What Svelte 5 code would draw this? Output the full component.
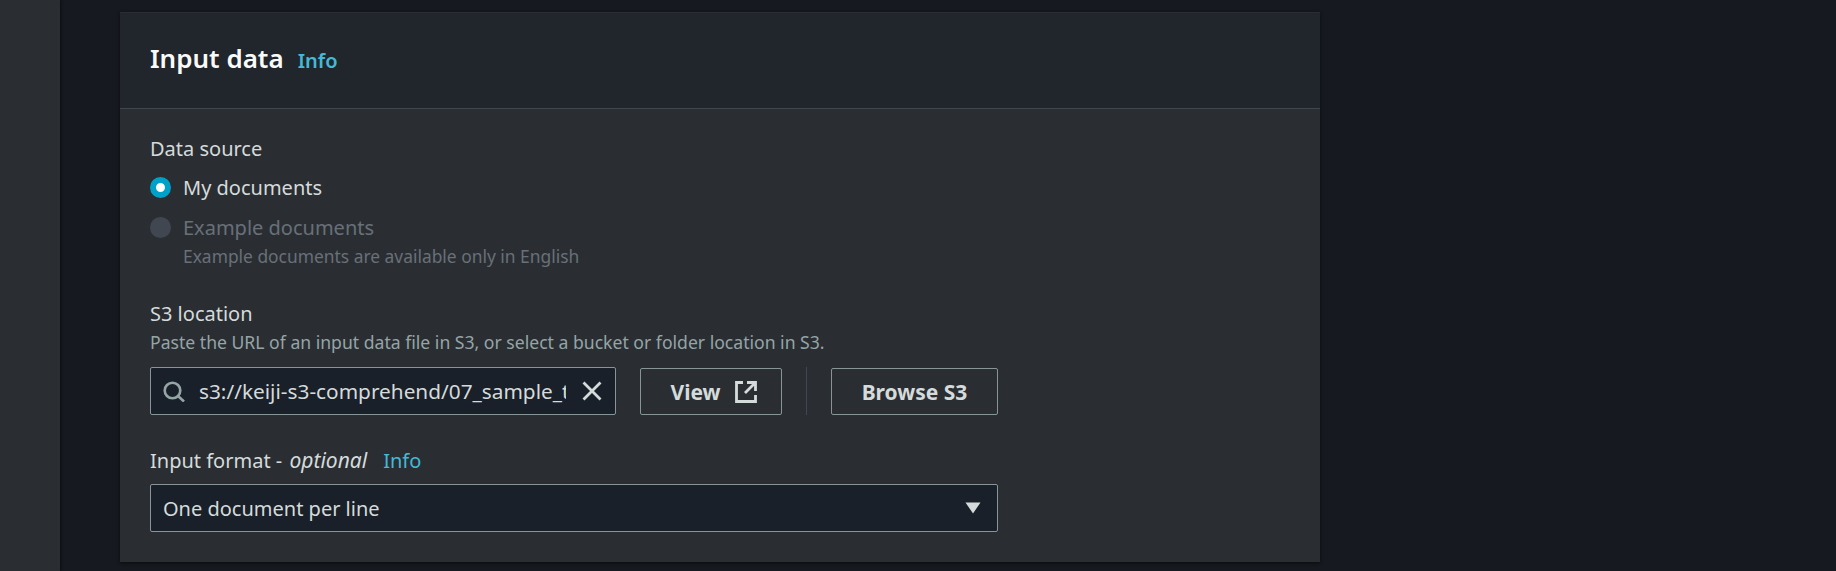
<script>
  const label = 'One document per line';
</script>

<div class="page">
  <aside class="rail"></aside>
  <main class="main">
    <section class="card">
      <header class="head">
        <h2>Input data</h2>
        <span class="info big">Info</span>
      </header>
      <div class="body">
        <div class="field source">
          <div class="label">Data source</div>
          <div class="radio on-row">
            <span class="dot on"></span>
            <span class="rtext">My documents</span>
          </div>
          <div class="radio off-row">
            <span class="dot off"></span>
            <div>
              <div class="rtext disabled">Example documents</div>
              <div class="rdesc">Example documents are available only in English</div>
            </div>
          </div>
        </div>

        <div class="field s3">
          <div class="label">S3 location</div>
          <div class="desc">Paste the URL of an input data file in S3, or select a bucket or folder location in S3.</div>
          <div class="s3row">
            <div class="search">
              <svg class="mag" viewBox="0 0 22 21" width="22" height="21" aria-hidden="true">
                <circle cx="9.5" cy="9.5" r="7.8" fill="none" stroke="currentColor" stroke-width="2.6"/>
                <path d="M15 15 L21 20.5" fill="none" stroke="currentColor" stroke-width="2.6"/>
              </svg>
              <span class="value">s3://keiji-s3-comprehend/07_sample_text.txt</span>
              <svg class="x" viewBox="0 0 20 20" width="20" height="20" aria-hidden="true">
                <path d="M1.5 1.5 L18.5 18.5 M18.5 1.5 L1.5 18.5" fill="none" stroke="currentColor" stroke-width="2.8"/>
              </svg>
            </div>
            <button class="btn view">
              View
              <svg viewBox="0 0 22 22" width="22" height="22" aria-hidden="true">
                <path d="M8 1.5 H1.5 V20.5 H20.5 V14 M12 1.5 H20.5 V10 M20 2 L10 12" fill="none" stroke="currentColor" stroke-width="2.8"/>
              </svg>
            </button>
            <span class="vr"></span>
            <button class="btn browse">Browse S3</button>
          </div>
        </div>

        <div class="field format">
          <div class="label">Input format - <em>optional</em><span class="info small">Info</span></div>
          <div class="select">
            <span>{label}</span>
            <svg viewBox="0 0 16 12" width="16" height="12" aria-hidden="true">
              <path d="M0.5 0.5 H15.5 L8 11.5 Z" fill="currentColor"/>
            </svg>
          </div>
        </div>
      </div>
    </section>
  </main>
</div>

<style>
  :global(body) {
    margin: 0;
    background: #16191f;
    font-family: "Noto Sans", "Open Sans", sans-serif;
  }
  .page {
    display: flex;
    width: 1836px;
    height: 571px;
    overflow: hidden;
    background: #16191f;
    color: #d5dbdb;
  }
  .rail {
    width: 60px;
    flex: none;
    background: #2a2e33;
    box-shadow: 1px 0 2px #0c0e12;
  }
  .main {
    padding: 12px 0 0 60px;
  }
  .card {
    width: 1200px;
    height: 550px;
    background: #2a2e33;
    box-shadow: 0 1px 3px #0b0c0f;
    border-top: 1px solid #2a2e33;
    box-sizing: border-box;
  }
  .head {
    display: flex;
    align-items: baseline;
    height: 96px;
    box-sizing: border-box;
    padding: 29px 30px 0;
    background: #21252c;
    border-bottom: 1px solid #414750;
  }
  h2 {
    margin: 0;
    font-size: 26px;
    line-height: 32px;
    font-weight: 600;
    color: #fafafa;
  }
  .info {
    color: #44b9d6;
  }
  .info.big {
    margin-left: 14px;
    font-size: 20px;
    font-weight: 600;
  }
  .info.small {
    margin-left: 16px;
    font-size: 20px;
  }
  .body {
    padding: 0 30px;
  }
  .field {
    display: flex;
    flex-direction: column;
  }
  .source {
    padding-top: 26px;
  }
  .s3 {
    padding-top: 31px;
  }
  .format {
    padding-top: 32px;
  }
  .label {
    font-size: 20px;
    line-height: 28px;
    height: 28px;
    color: #d5dbdb;
  }
  .label em {
    font-size: 21px;
    line-height: 1;
    margin-left: 2px;
  }
  .radio {
    display: flex;
    gap: 12px;
  }
  .on-row {
    margin-top: 11px;
    align-items: center;
    height: 27px;
  }
  .off-row {
    margin-top: 13px;
  }
  .dot {
    width: 21px;
    height: 21px;
    border-radius: 50%;
    flex: none;
    box-sizing: border-box;
  }
  .dot.on {
    background: #fff;
    border: 6.5px solid #00a1c9;
  }
  .dot.off {
    background: #414750;
    margin-top: 3px;
  }
  .rtext {
    font-size: 20px;
    line-height: 27px;
    color: #d5dbdb;
  }
  .rtext.disabled {
    color: #687078;
  }
  .rdesc {
    font-size: 17.4px;
    line-height: 25px;
    margin-top: 3px;
    color: #687078;
  }
  .desc {
    font-size: 17.6px;
    line-height: 25px;
    color: #95a5a6;
    margin-top: 2px;
  }
  .s3row {
    display: flex;
    align-items: flex-end;
    margin-top: 12px;
    height: 48px;
  }
  .search {
    display: flex;
    align-items: center;
    width: 466px;
    height: 48px;
    box-sizing: border-box;
    border: 1px solid #879596;
    border-radius: 2px;
    background: #1a2029;
    padding: 0 13px 0 12px;
    color: #d5dbdb;
  }
  .mag {
    flex: none;
    color: #95a5a6;
  }
  .value {
    flex: 1;
    min-width: 0;
    margin: 0 16px 0 14px;
    white-space: nowrap;
    overflow: hidden;
    font-size: 20.8px;
    color: #d5dbdb;
  }
  .x {
    flex: none;
    color: #d5dbdb;
  }
  .btn {
    height: 47px;
    box-sizing: border-box;
    border: 1px solid #879596;
    border-radius: 2px;
    background: transparent;
    color: #d5dbdb;
    font: 700 21px "Noto Sans", sans-serif;
    padding: 0;
    display: flex;
    align-items: center;
    justify-content: center;
  }
  .view {
    margin-left: 24px;
    width: 142px;
    gap: 14px;
    padding-left: 5px;
  }
  .vr {
    width: 1px;
    height: 48px;
    background: #414750;
    margin: 0 24px;
  }
  .browse {
    width: 167px;
  }
  .select {
    display: flex;
    align-items: center;
    justify-content: space-between;
    width: 848px;
    height: 48px;
    margin-top: 9px;
    box-sizing: border-box;
    padding: 0 16px 0 12px;
    border: 1px solid #879596;
    border-radius: 2px;
    background: #1a2029;
    font-size: 20px;
    color: #d5dbdb;
  }
</style>
